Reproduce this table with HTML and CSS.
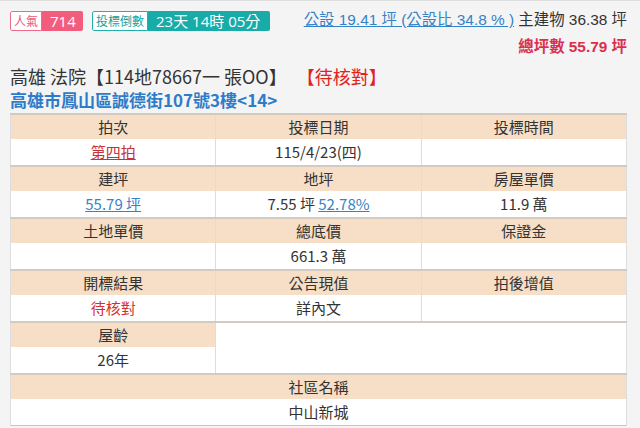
FILE: index.html
```html
<!DOCTYPE html>
<html lang="zh-Hant">
<head>
<meta charset="utf-8">
<title>法拍物件</title>
<link rel="stylesheet" href="styles.css">
</head>
<body>
<div class="top">
  <div class="badges">
    <span class="badge pink"><span class="lab">人氣</span><span class="val">714</span></span>
    <span class="badge teal"><span class="lab">投標倒數</span><span class="val">23天 14時 05分</span></span>
  </div>
  <div class="area">
    <div><a class="link" href="#">公設 19.41 坪 (公設比 34.8 % )</a> 主建物 36.38 坪</div>
    <div class="total">總坪數 55.79 坪</div>
  </div>
</div>
<div class="title">高雄 法院【114地78667一 張OO】 <span class="status">【待核對】</span></div>
<div class="addr">高雄市鳳山區誠德街107號3樓&lt;14&gt;</div>
<table class="info">
  <tr class="hd"><td>拍次</td><td>投標日期</td><td>投標時間</td></tr>
  <tr class="dt"><td><span class="redu">第四拍</span></td><td>115/4/23(四)</td><td></td></tr>
  <tr class="hd"><td>建坪</td><td>地坪</td><td>房屋單價</td></tr>
  <tr class="dt"><td><span class="blu">55.79 坪</span></td><td>7.55 坪 <span class="blu">52.78%</span></td><td>11.9 萬</td></tr>
  <tr class="hd"><td>土地單價</td><td>總底價</td><td>保證金</td></tr>
  <tr class="dt"><td></td><td>661.3 萬</td><td></td></tr>
  <tr class="hd"><td>開標結果</td><td>公告現值</td><td>拍後增值</td></tr>
  <tr class="dt"><td class="red">待核對</td><td>詳內文</td><td></td></tr>
  <tr class="hd"><td>屋齡</td><td class="blank" colspan="2" rowspan="2"></td></tr>
  <tr class="dt"><td>26年</td></tr>
  <tr class="hd"><td colspan="3">社區名稱</td></tr>
  <tr class="dt"><td colspan="3">中山新城</td></tr>
</table>
</body>
</html>
```
FILE: styles.css
```css
html, body {
  margin: 0;
  background: #f4f4f4;
}
body {
  padding: 0 10px;
  border-top: 1px solid #dedede;
  font-family: "Noto Sans CJK TC", "Noto Sans", sans-serif;
  color: #333;
  overflow: hidden;
}
.top {
  display: flex;
  justify-content: space-between;
  align-items: flex-start;
  height: 57px;
}
.badges {
  display: flex;
  gap: 9px;
  margin-top: 10px;
}
.badge {
  display: flex;
  height: 20px;
  border-radius: 2px;
  overflow: hidden;
}
.badge .lab {
  font-size: 12px;
  line-height: 18px;
  padding: 0 3px;
  background: #fff;
  border: 1px solid;
  border-radius: 2px 0 0 2px;
}
.badge .val {
  color: #fff;
  font-family: "Open Sans", "Noto Sans CJK TC", sans-serif;
  font-size: 15px;
  line-height: 20px;
}
.pink .lab { color: #e9587a; border-color: #ef6a88; }
.pink .val { background: #f25d7d; padding: 0 6px 0 8px; width: 27px; }
.teal .lab { color: #1a9f9c; border-color: #1fb0ac; }
.teal .val { background: #18aba7; padding: 0 10px 0 8px; }
.area {
  text-align: right;
  font-family: "Liberation Sans", "Noto Sans CJK TC", sans-serif;
  font-size: 15.4px;
  line-height: 22px;
  padding-top: 8px;
  padding-right: 3px;
  color: #333;
}
.link {
  color: #3482c7;
  text-decoration: underline;
}
.total {
  margin-top: 5px;
  color: #d9304c;
  font-weight: bold;
}
.title {
  margin-top: 6px;
  font-size: 18px;
  line-height: 24px;
  color: #333;
}
.status {
  color: #e3221c;
  margin-left: 6px;
}
.addr {
  font-size: 17px;
  line-height: 24px;
  color: #2e7cc9;
  font-weight: bold;
}
.info {
  margin-top: 1px;
  width: 617px;
  border-collapse: collapse;
  table-layout: fixed;
  background: #fff;
  border: 1px solid #c9c3bb;
  font-size: 15px;
  color: #333;
}
.info td {
  text-align: center;
  border-left: 1px solid #ddd;
  border-right: 1px solid #ddd;
  padding: 0;
}
.info .hd td {
  background: #f6dfc6;
  height: 24px;
  line-height: 24px;
  border-top: 2px solid #d3cbc1;
}
.info .hd td.blank {
  background: #fff;
}
.info .dt td {
  height: 26px;
  line-height: 26px;
}
.redu {
  color: #c8323a;
  text-decoration: underline;
}
.red {
  color: #d9302f;
}
.blu {
  color: #3483c8;
  text-decoration: underline;
}
```
